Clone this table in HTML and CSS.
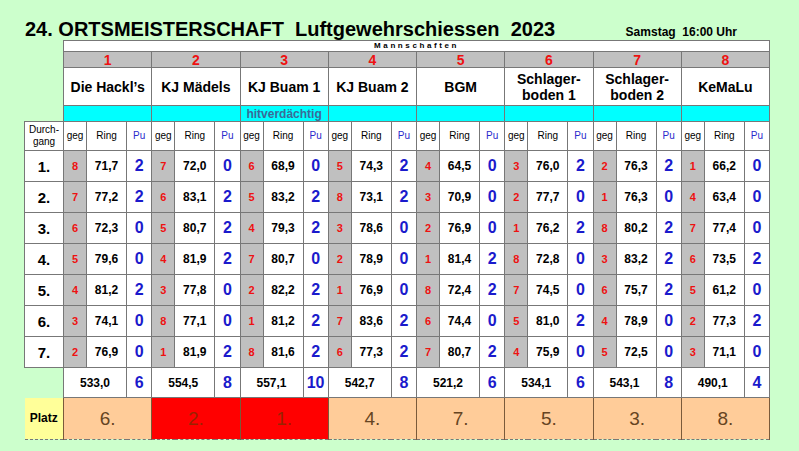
FILE: index.html
```html
<!DOCTYPE html>
<html lang="de">
<head>
<meta charset="utf-8">
<title>24. Ortsmeisterschaft Luftgewehrschiessen 2023</title>
<link rel="stylesheet" href="styles.css">
</head>
<body>
<div class="header">
  <h1 class="title">24. ORTSMEISTERSCHAFT&nbsp; Luftgewehrschiessen&nbsp; 2023</h1>
  <div class="date">Samstag&nbsp; 16:00 Uhr</div>
</div>
<table class="board">
  <colgroup>
    <col class="c-d">
    <col class="c-g"><col class="c-r"><col class="c-p">
    <col class="c-g"><col class="c-r"><col class="c-p">
    <col class="c-g"><col class="c-r"><col class="c-p">
    <col class="c-g"><col class="c-r"><col class="c-p">
    <col class="c-g"><col class="c-r"><col class="c-p">
    <col class="c-g"><col class="c-r"><col class="c-p">
    <col class="c-g"><col class="c-r"><col class="c-p">
    <col class="c-g"><col class="c-r"><col class="c-p">
  </colgroup>
  <tbody>
    <tr class="r-mann"><td class="blank"></td><td colspan="24" class="mann">Mannschaften</td></tr>
    <tr class="r-num">
      <td class="blank"></td>
      <td colspan="3">1</td><td colspan="3">2</td><td colspan="3">3</td><td colspan="3">4</td>
      <td colspan="3">5</td><td colspan="3">6</td><td colspan="3">7</td><td colspan="3">8</td>
    </tr>
    <tr class="r-name">
      <td class="blank"></td>
      <td colspan="3">Die Hackl’s</td><td colspan="3">KJ Mädels</td><td colspan="3">KJ Buam 1</td><td colspan="3">KJ Buam 2</td>
      <td colspan="3">BGM</td><td colspan="3">Schlager-<br>boden 1</td><td colspan="3">Schlager-<br>boden 2</td><td colspan="3">KeMaLu</td>
    </tr>
    <tr class="r-cyan">
      <td class="blank"></td>
      <td colspan="3"></td><td colspan="3"></td><td colspan="3">hitverdächtig</td><td colspan="3"></td>
      <td colspan="3"></td><td colspan="3"></td><td colspan="3"></td><td colspan="3"></td>
    </tr>
    <tr class="r-head">
      <td class="dh">Durch-<br>gang</td>
      <td>geg</td><td>Ring</td><td class="puh">Pu</td>
      <td>geg</td><td>Ring</td><td class="puh">Pu</td>
      <td>geg</td><td>Ring</td><td class="puh">Pu</td>
      <td>geg</td><td>Ring</td><td class="puh">Pu</td>
      <td>geg</td><td>Ring</td><td class="puh">Pu</td>
      <td>geg</td><td>Ring</td><td class="puh">Pu</td>
      <td>geg</td><td>Ring</td><td class="puh">Pu</td>
      <td>geg</td><td>Ring</td><td class="puh">Pu</td>
    </tr>
    <tr class="r-data">
      <td class="dg">1.</td>
      <td class="geg">8</td><td class="ring">71,7</td><td class="pu">2</td>
      <td class="geg">7</td><td class="ring">72,0</td><td class="pu">0</td>
      <td class="geg">6</td><td class="ring">68,9</td><td class="pu">0</td>
      <td class="geg">5</td><td class="ring">74,3</td><td class="pu">2</td>
      <td class="geg">4</td><td class="ring">64,5</td><td class="pu">0</td>
      <td class="geg">3</td><td class="ring">76,0</td><td class="pu">2</td>
      <td class="geg">2</td><td class="ring">76,3</td><td class="pu">2</td>
      <td class="geg">1</td><td class="ring">66,2</td><td class="pu">0</td>
    </tr>
    <tr class="r-data">
      <td class="dg">2.</td>
      <td class="geg">7</td><td class="ring">77,2</td><td class="pu">2</td>
      <td class="geg">6</td><td class="ring">83,1</td><td class="pu">2</td>
      <td class="geg">5</td><td class="ring">83,2</td><td class="pu">2</td>
      <td class="geg">8</td><td class="ring">73,1</td><td class="pu">2</td>
      <td class="geg">3</td><td class="ring">70,9</td><td class="pu">0</td>
      <td class="geg">2</td><td class="ring">77,7</td><td class="pu">0</td>
      <td class="geg">1</td><td class="ring">76,3</td><td class="pu">0</td>
      <td class="geg">4</td><td class="ring">63,4</td><td class="pu">0</td>
    </tr>
    <tr class="r-data">
      <td class="dg">3.</td>
      <td class="geg">6</td><td class="ring">72,3</td><td class="pu">0</td>
      <td class="geg">5</td><td class="ring">80,7</td><td class="pu">2</td>
      <td class="geg">4</td><td class="ring">79,3</td><td class="pu">2</td>
      <td class="geg">3</td><td class="ring">78,6</td><td class="pu">0</td>
      <td class="geg">2</td><td class="ring">76,9</td><td class="pu">0</td>
      <td class="geg">1</td><td class="ring">76,2</td><td class="pu">2</td>
      <td class="geg">8</td><td class="ring">80,2</td><td class="pu">2</td>
      <td class="geg">7</td><td class="ring">77,4</td><td class="pu">0</td>
    </tr>
    <tr class="r-data">
      <td class="dg">4.</td>
      <td class="geg">5</td><td class="ring">79,6</td><td class="pu">0</td>
      <td class="geg">4</td><td class="ring">81,9</td><td class="pu">2</td>
      <td class="geg">7</td><td class="ring">80,7</td><td class="pu">0</td>
      <td class="geg">2</td><td class="ring">78,9</td><td class="pu">0</td>
      <td class="geg">1</td><td class="ring">81,4</td><td class="pu">2</td>
      <td class="geg">8</td><td class="ring">72,8</td><td class="pu">0</td>
      <td class="geg">3</td><td class="ring">83,2</td><td class="pu">2</td>
      <td class="geg">6</td><td class="ring">73,5</td><td class="pu">2</td>
    </tr>
    <tr class="r-data">
      <td class="dg">5.</td>
      <td class="geg">4</td><td class="ring">81,2</td><td class="pu">2</td>
      <td class="geg">3</td><td class="ring">77,8</td><td class="pu">0</td>
      <td class="geg">2</td><td class="ring">82,2</td><td class="pu">2</td>
      <td class="geg">1</td><td class="ring">76,9</td><td class="pu">0</td>
      <td class="geg">8</td><td class="ring">72,4</td><td class="pu">2</td>
      <td class="geg">7</td><td class="ring">74,5</td><td class="pu">0</td>
      <td class="geg">6</td><td class="ring">75,7</td><td class="pu">2</td>
      <td class="geg">5</td><td class="ring">61,2</td><td class="pu">0</td>
    </tr>
    <tr class="r-data">
      <td class="dg">6.</td>
      <td class="geg">3</td><td class="ring">74,1</td><td class="pu">0</td>
      <td class="geg">8</td><td class="ring">77,1</td><td class="pu">0</td>
      <td class="geg">1</td><td class="ring">81,2</td><td class="pu">2</td>
      <td class="geg">7</td><td class="ring">83,6</td><td class="pu">2</td>
      <td class="geg">6</td><td class="ring">74,4</td><td class="pu">0</td>
      <td class="geg">5</td><td class="ring">81,0</td><td class="pu">2</td>
      <td class="geg">4</td><td class="ring">78,9</td><td class="pu">0</td>
      <td class="geg">2</td><td class="ring">77,3</td><td class="pu">2</td>
    </tr>
    <tr class="r-data">
      <td class="dg">7.</td>
      <td class="geg">2</td><td class="ring">76,9</td><td class="pu">0</td>
      <td class="geg">1</td><td class="ring">81,9</td><td class="pu">2</td>
      <td class="geg">8</td><td class="ring">81,6</td><td class="pu">2</td>
      <td class="geg">6</td><td class="ring">77,3</td><td class="pu">2</td>
      <td class="geg">7</td><td class="ring">80,7</td><td class="pu">2</td>
      <td class="geg">4</td><td class="ring">75,9</td><td class="pu">0</td>
      <td class="geg">5</td><td class="ring">72,5</td><td class="pu">0</td>
      <td class="geg">3</td><td class="ring">71,1</td><td class="pu">0</td>
    </tr>
    <tr class="r-tot">
      <td class="blank"></td>
      <td colspan="2" class="tring">533,0</td><td class="pu">6</td>
      <td colspan="2" class="tring">554,5</td><td class="pu">8</td>
      <td colspan="2" class="tring">557,1</td><td class="pu">10</td>
      <td colspan="2" class="tring">542,7</td><td class="pu">8</td>
      <td colspan="2" class="tring">521,2</td><td class="pu">6</td>
      <td colspan="2" class="tring">534,1</td><td class="pu">6</td>
      <td colspan="2" class="tring">543,1</td><td class="pu">8</td>
      <td colspan="2" class="tring">490,1</td><td class="pu">4</td>
    </tr>
    <tr class="r-platz">
      <td class="platz">Platz</td>
      <td colspan="3" class="pl">6.</td>
      <td colspan="3" class="pl top">2.</td>
      <td colspan="3" class="pl top">1.</td>
      <td colspan="3" class="pl">4.</td>
      <td colspan="3" class="pl">7.</td>
      <td colspan="3" class="pl">5.</td>
      <td colspan="3" class="pl">3.</td>
      <td colspan="3" class="pl">8.</td>
    </tr>
  </tbody>
</table>
</body>
</html>
```
FILE: styles.css
```css
* { box-sizing: border-box; }
html, body {
  margin: 0;
  padding: 0;
}
body {
  background: #ccffcc;
  font-family: "Liberation Sans", Arial, sans-serif;
  color: #000;
  width: 799px;
  height: 451px;
  overflow: hidden;
}
.header {
  display: flex;
  align-items: baseline;
  height: 40px;
  padding: 18px 0 0 25px;
}
.title {
  margin: 0;
  font-size: 20px;
  line-height: 22px;
  font-weight: bold;
}
.date {
  margin-left: auto;
  margin-right: 62px;
  font-size: 12px;
  font-weight: bold;
}
.board {
  margin-left: 24px;
  width: 745px;
  border-collapse: collapse;
  table-layout: fixed;
}
.c-d { width: 39px; }
.c-g { width: 23px; }
.c-r { width: 40px; }
.c-p { width: 25.25px; }
.board td {
  border: 1px solid #777;
  padding: 0;
  text-align: center;
  vertical-align: middle;
  white-space: nowrap;
  overflow: hidden;
  line-height: 1;
  background: #fff;
}
.board td.blank {
  border: none;
  background: transparent;
}
.r-mann td { height: 11px; }
.mann {
  font-size: 8px;
  font-weight: bold;
  letter-spacing: 2.6px;
  line-height: 9px;
}
.r-num td { height: 16px; }
.r-num td:not(.blank) {
  background: #c0c0c0;
  color: #ee1111;
  font-size: 14px;
  font-weight: bold;
}
.r-name td { height: 38px; }
.r-name td:not(.blank) {
  font-size: 14px;
  font-weight: bold;
  line-height: 16px;
}
.r-cyan td { height: 16px; }
.r-cyan td:not(.blank) {
  background: #00ffff;
  color: #3a6b98;
  font-size: 12px;
  font-weight: bold;
}
.r-head td {
  height: 29px;
  font-size: 10px;
}
.r-head .dh { line-height: 12px; }
.r-head .puh { color: #2a2acc; }
.r-data td { height: 31px; }
.dg {
  font-size: 15px;
  font-weight: bold;
}
.board td.geg {
  background: #c0c0c0;
  color: #ee1111;
  font-size: 11px;
  font-weight: bold;
}
.ring {
  font-size: 12px;
  font-weight: bold;
}
.pu {
  color: #1a1acc;
  font-size: 16px;
  font-weight: bold;
}
.r-tot td { height: 30px; }
.tring {
  font-size: 12px;
  font-weight: bold;
}
.r-platz td { height: 42px; }
.board td.platz {
  background: #ffff99;
  border: none;
  border-bottom: 1px dashed #777;
  font-size: 12px;
  font-weight: bold;
}
.board td.pl {
  background: #ffcc99;
  color: #664422;
  font-size: 19px;
  border-color: #7a5a3a;
  border-bottom: 1px dashed #777;
}
.board td.pl.top {
  background: #ff0000;
  color: #992200;
}
```
